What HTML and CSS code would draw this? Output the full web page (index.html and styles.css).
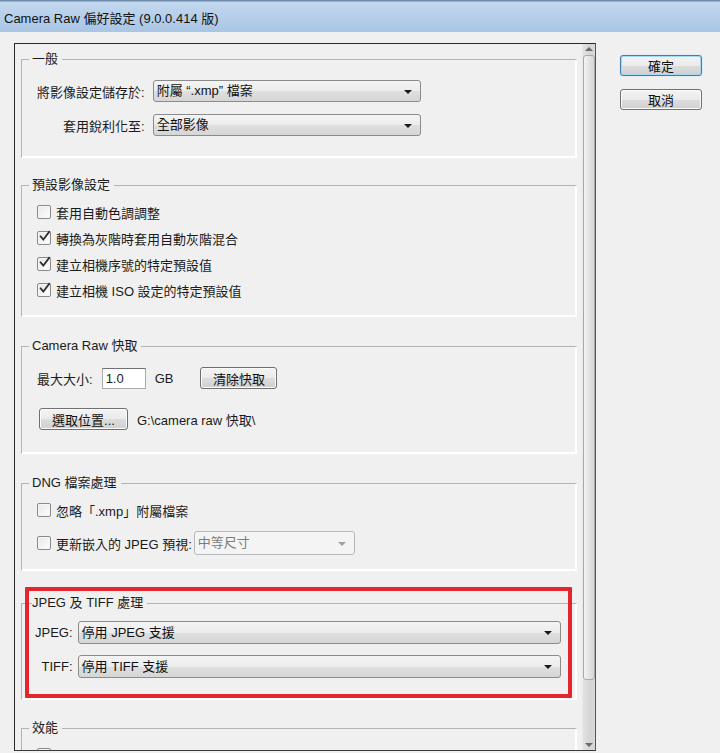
FILE: index.html
```html
<!DOCTYPE html>
<html lang="zh-Hant">
<head>
<meta charset="utf-8">
<title>Camera Raw 偏好設定</title>
<link rel="stylesheet" href="styles.css">
</head>
<body>
<div class="titlebar">Camera Raw 偏好設定 (9.0.0.414 版)</div>
<div class="window">
  <div class="panel">
    <div class="content">
      <fieldset class="group g1">
        <legend>一般</legend>
        <div class="form-grid">
          <span class="lbl">將影像設定儲存於:</span>
          <div class="select sel-general">附屬 “.xmp” 檔案</div>
          <span class="lbl">套用銳利化至:</span>
          <div class="select sel-general">全部影像</div>
        </div>
      </fieldset>

      <fieldset class="group g2">
        <legend>預設影像設定</legend>
        <div class="check-row"><span class="cb"></span>套用自動色調調整</div>
        <div class="check-row"><span class="cb checked"><svg viewBox="0 0 13 13"><path d="M2.6 6.4 L5.3 9.6 L11.2 1.8"/></svg></span>轉換為灰階時套用自動灰階混合</div>
        <div class="check-row"><span class="cb checked"><svg viewBox="0 0 13 13"><path d="M2.6 6.4 L5.3 9.6 L11.2 1.8"/></svg></span>建立相機序號的特定預設值</div>
        <div class="check-row"><span class="cb checked"><svg viewBox="0 0 13 13"><path d="M2.6 6.4 L5.3 9.6 L11.2 1.8"/></svg></span>建立相機 ISO 設定的特定預設值</div>
      </fieldset>

      <fieldset class="group g3">
        <legend>Camera Raw 快取</legend>
        <div class="cache-row">
          <span>最大大小:</span>
          <span class="textbox">1.0</span>
          <span class="unit">GB</span>
          <span class="btn btn-purge">清除快取</span>
        </div>
        <div class="cache-row second">
          <span class="btn btn-loc">選取位置...</span>
          <span class="path">G:\camera raw 快取\</span>
        </div>
      </fieldset>

      <fieldset class="group g4">
        <legend>DNG 檔案處理</legend>
        <div class="check-row"><span class="cb"></span>忽略「.xmp」附屬檔案</div>
        <div class="check-row dng-row"><span class="cb"></span>更新嵌入的 JPEG 預視:<div class="select disabled sel-size">中等尺寸</div></div>
      </fieldset>

      <fieldset class="group g5 highlight">
        <legend>JPEG 及 TIFF 處理</legend>
        <div class="form-grid tight">
          <span class="lbl">JPEG:</span>
          <div class="select">停用 JPEG 支援</div>
          <span class="lbl">TIFF:</span>
          <div class="select">停用 TIFF 支援</div>
        </div>
      </fieldset>

      <fieldset class="group g6">
        <legend>效能</legend>
        <div class="check-row"><span class="cb"></span></div>
      </fieldset>
    </div>
    <div class="scrollbar">
      <div class="sb-arrow up"></div>
      <div class="sb-track">
        <div class="sb-thumb"></div>
      </div>
      <div class="sb-arrow down"></div>
    </div>
  </div>
  <div class="actions">
    <span class="btn btn-action default">確定</span>
    <span class="btn btn-action">取消</span>
  </div>
</div>
</body>
</html>
```
FILE: styles.css
```css
* { box-sizing: border-box; }

html, body {
  margin: 0;
  padding: 0;
}

body {
  width: 720px;
  height: 753px;
  overflow: hidden;
  background: #f0f0f0;
  font-family: "Liberation Sans", "Noto Sans CJK TC", sans-serif;
  font-size: 13px;
  color: #1b1b1b;
}

.titlebar {
  height: 32px;
  display: flex;
  align-items: center;
  padding: 2px 0 0 4px;
  background: linear-gradient(#6f8cab 0, #6f8cab 1px, #c3d8ef 2px, #b6cfea 50%, #a9c5e5 100%);
  color: #111;
  font-size: 13px;
}

.window {
  display: flex;
  align-items: flex-start;
  padding: 11px 0 0 14px;
  gap: 24px;
}

.panel {
  width: 582px;
  height: 708px;
  border: 1px solid #2a2a2a;
  border-right-color: #555;
  border-bottom-color: #3a3a3a;
  display: flex;
  overflow: hidden;
  background: #f0f0f0;
}

.content {
  flex: 1;
  padding: 8px 5px 0 6px;
  display: flex;
  flex-direction: column;
  min-width: 0;
}

.group {
  position: relative;
  margin: 0;
  min-width: 0;
  border: 1px solid;
  border-color: #b4b4b4 #ffffff #ffffff #b4b4b4;
  box-shadow: inset -1px -1px 0 #ffffff;
  padding: 0 0 0 15px;
}

.group legend {
  padding: 0 4px 0 3px;
  margin-left: -8px;
  height: 14px;
  line-height: 14px;
  font-size: 13px;
}

/* group spacing */
.g1 { padding-top: 14px; padding-bottom: 21px; }
.g2 { margin-top: 20px; padding-top: 11px; padding-bottom: 17px; }
.g3 { margin-top: 22px; padding-top: 14px; padding-bottom: 23px; }
.g4 { margin-top: 22px; padding-top: 11px; padding-bottom: 15px; }
.g5 { margin-top: 25px; padding-top: 11px; padding-bottom: 21px; padding-left: 13px; }
.g5 legend { margin-left: -3px; padding-left: 0; }
.g6 { margin-top: 21px; padding-top: 11px; padding-bottom: 20px; }

.highlight::after {
  content: "";
  position: absolute;
  left: 3px;
  right: 4px;
  top: -23px;
  bottom: 1px;
  border: 4px solid #e3262b;
  border-radius: 1px;
  pointer-events: none;
}

/* label / select grid */
.form-grid {
  display: grid;
  grid-template-columns: auto 1fr;
  column-gap: 8px;
  row-gap: 12px;
  align-items: center;
}
.form-grid.tight { row-gap: 11px; column-gap: 5px; padding-right: 15px; }

.lbl { text-align: right; }

.select {
  position: relative;
  height: 22px;
  line-height: 20px;
  padding: 0 20px 0 3px;
  border: 1px solid #8b8b8b;
  border-radius: 3px;
  background: linear-gradient(#f4f4f4 0%, #ececec 50%, #dfdfdf 51%, #d6d6d6 100%);
  white-space: nowrap;
  color: #111;
}
.select::after {
  content: "";
  position: absolute;
  right: 8px;
  top: 9px;
  border-left: 4px solid transparent;
  border-right: 4px solid transparent;
  border-top: 4px solid #1a1a1a;
}
.sel-general { width: 268px; }
.g5 .select { height: 23px; line-height: 21px; }

.select.disabled {
  background: #f4f4f4;
  border-color: #b5b9bc;
  color: #7d7d7d;
  height: 24px;
  line-height: 22px;
}
.select.disabled::after {
  border-top-color: #a0a0a0;
  top: 10px;
}
.sel-size {
  width: 161px;
  margin-left: 2px;
}

/* checkboxes */
.check-row {
  display: flex;
  align-items: center;
  height: 18px;
  margin-bottom: 8px;
  white-space: nowrap;
}
.check-row:last-child { margin-bottom: 0; }

.cb {
  width: 14px;
  height: 14px;
  margin-right: 5px;
  flex: none;
  border: 1px solid #8a8a8a;
  border-radius: 2px;
  background: linear-gradient(135deg, #e6e6e6, #ffffff);
  box-shadow: inset 0 0 0 1px #f6f6f6;
  position: relative;
}
.cb svg {
  position: absolute;
  left: 0;
  top: -2px;
  width: 13px;
  height: 13px;
  overflow: visible;
}
.cb svg path {
  fill: none;
  stroke: #2e2e2e;
  stroke-width: 1.7;
  stroke-linecap: square;
}

.g4 .check-row { margin-bottom: 12px; }
.g4 .check-row:last-child { margin-bottom: 0; }
.dng-row { height: 24px; }

/* cache rows */
.cache-row {
  display: flex;
  align-items: center;
  height: 22px;
}
.cache-row.second { margin-top: 19px; padding-left: 2px; }

.textbox {
  width: 44px;
  height: 21px;
  margin-left: 9px;
  padding-left: 3px;
  line-height: 19px;
  background: #fff;
  border: 1px solid #a9acb2;
  border-top-color: #6e7378;
}
.unit { margin-left: 9px; }

.btn {
  display: inline-flex;
  align-items: center;
  justify-content: center;
  height: 22px;
  border: 1px solid #707070;
  border-radius: 3px;
  background: linear-gradient(#f3f3f3 0%, #ebebeb 50%, #dddddd 51%, #d0d0d0 100%);
  box-shadow: inset 0 0 0 1px #fbfbfb;
  color: #111;
  white-space: nowrap;
}
.btn-purge { width: 77px; margin-left: 27px; }
.btn-loc { width: 89px; }
.path { margin-left: 9px; }

/* scrollbar */
.scrollbar {
  width: 13px;
  flex: none;
  display: flex;
  flex-direction: column;
  background: linear-gradient(90deg, #e2e2e2, #d4d4d4 60%, #d9d9d9);
  border-left: 1px solid #e9e9e9;
}
.sb-arrow {
  height: 11px;
  flex: none;
  position: relative;
}
.sb-arrow::after {
  content: "";
  position: absolute;
  left: 2px;
  border-left: 4px solid transparent;
  border-right: 4px solid transparent;
}
.sb-arrow.up::after { top: 3px; border-bottom: 4px solid #6a6a6a; }
.sb-arrow.down::after { top: 4px; border-top: 4px solid #6a6a6a; }

.sb-track {
  flex: 1;
}
.sb-thumb {
  height: 625px;
  border: 1px solid #a9a9a9;
  border-radius: 3px;
  background: linear-gradient(90deg, #f4f4f4, #e4e4e4 50%, #d6d6d6);
}

/* dialog buttons */
.actions {
  display: flex;
  flex-direction: column;
  gap: 13px;
  padding-top: 12px;
}
.btn-action {
  width: 82px;
  height: 21px;
}
.btn-action.default {
  border-color: #3c7fb1;
  box-shadow: inset 0 0 0 1px #a7d8f3, 0 0 1px #7cc3ec;
}
```
